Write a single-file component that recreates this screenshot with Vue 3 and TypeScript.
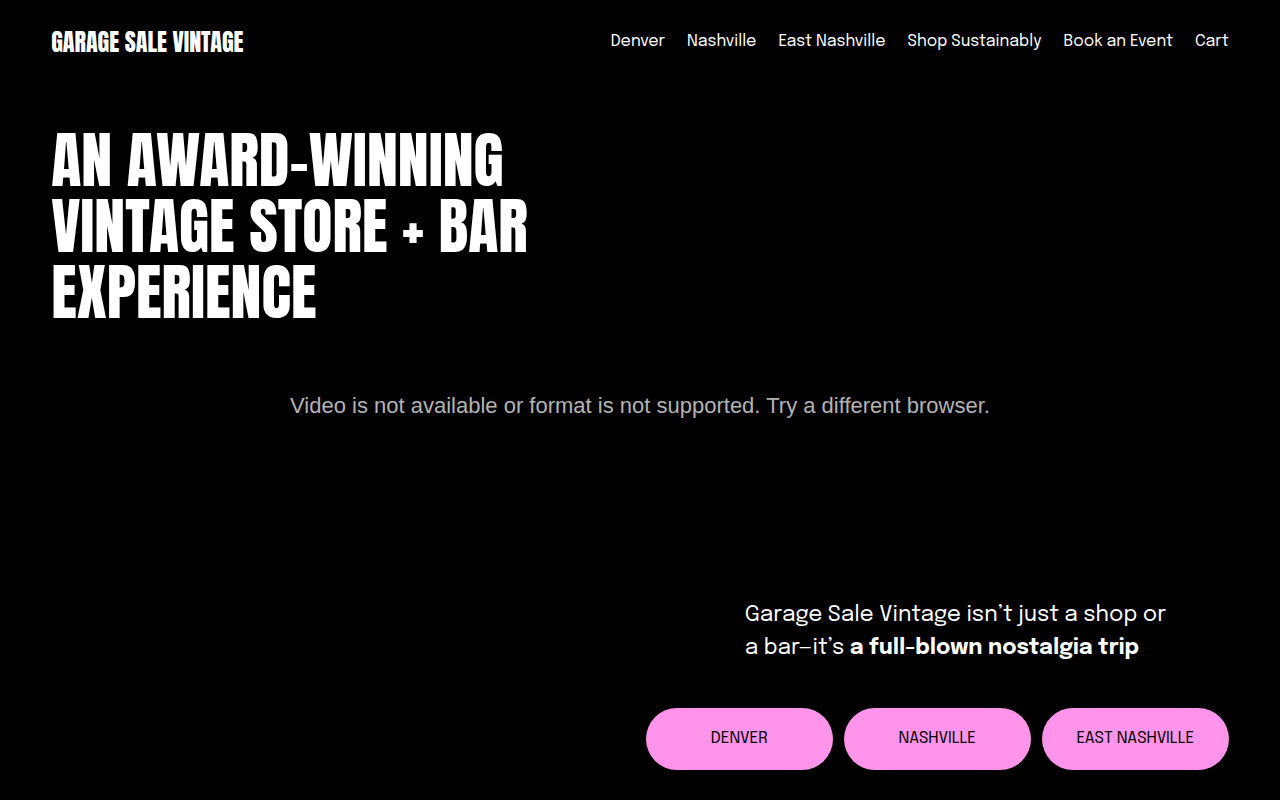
<script setup lang="ts">
interface LinkItem {
  label: string
  href: string
}

const navigation: LinkItem[] = [
  { label: 'Denver', href: '#denver' },
  { label: 'Nashville', href: '#nashville' },
  { label: 'East Nashville', href: '#east-nashville' },
  { label: 'Shop Sustainably', href: '#shop' },
  { label: 'Book an Event', href: '#events' },
  { label: 'Cart', href: '#cart' },
]

const locations: LinkItem[] = navigation.slice(0, 3)
</script>

<template>
  <div class="page">
    <header class="header">
      <a class="brand" href="#home">GARAGE SALE VINTAGE</a>
      <nav class="nav">
        <a v-for="item in navigation" :key="item.label" :href="item.href">{{ item.label }}</a>
      </nav>
    </header>
    <main class="hero">
      <h1>AN AWARD-WINNING<br />VINTAGE STORE + BAR<br />EXPERIENCE</h1>
      <p class="notice">Video is not available or format is not supported. Try a different browser.</p>
      <section class="intro">
        <p class="lead">Garage Sale Vintage isn’t just a shop or<br />a bar—it’s <strong>a full-blown nostalgia trip</strong></p>
        <div class="locations">
          <a v-for="item in locations" :key="item.label" :href="item.href">{{ item.label.toUpperCase() }}</a>
        </div>
      </section>
    </main>
  </div>
</template>

<style>
body {
  margin: 0;
  background: #000;
}
</style>

<style scoped>
.page {
  box-sizing: border-box;
  display: flex;
  flex-direction: column;
  min-height: 100vh;
  padding: 0 4% 30px;
  background: #000;
  color: #fff;
  font-family: Epilogue, Inter, "Liberation Sans", sans-serif;
  font-weight: 400;
}
a {
  color: inherit;
  text-decoration: none;
}
.header {
  display: flex;
  align-items: center;
  justify-content: space-between;
  height: 84px;
}
.brand {
  font-family: Anton, "Open Sans", sans-serif;
  font-size: 24px;
  white-space: nowrap;
}
.nav {
  display: flex;
  gap: 22px;
  padding-bottom: 2px;
  font-size: 16px;
}
.hero {
  display: flex;
  flex: 1;
  flex-direction: column;
}
h1 {
  margin: 43px 0 0;
  font-family: Anton, "Open Sans", sans-serif;
  font-size: 62px;
  font-weight: 400;
  line-height: 66px;
  white-space: nowrap;
}
.notice {
  margin: 65px 0 0;
  color: #b3b3b3;
  font-family: "Liberation Sans", sans-serif;
  font-size: 22px;
  line-height: 32px;
  text-align: center;
}
.intro {
  display: flex;
  flex-direction: column;
  align-items: flex-end;
  gap: 43px;
  margin-top: auto;
}
.lead {
  width: 484px;
  max-width: 100%;
  margin: 0;
  font-size: 22px;
  line-height: 33px;
}
.lead strong {
  font-weight: 700;
}
.locations {
  display: grid;
  grid-template-columns: repeat(3, 1fr);
  gap: 11px;
  width: 583px;
  max-width: 100%;
}
.locations a {
  box-sizing: border-box;
  display: flex;
  align-items: center;
  justify-content: center;
  height: 62px;
  padding-bottom: 2px;
  border-radius: 31px;
  background: #ff94ea;
  color: #000;
  font-size: 16px;
}
</style>
